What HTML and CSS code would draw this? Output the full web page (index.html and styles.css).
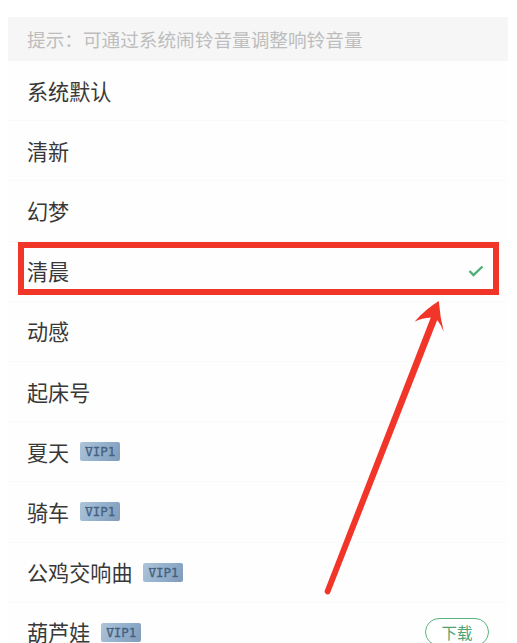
FILE: index.html
```html
<!DOCTYPE html>
<html lang="zh-CN">
<head>
  <meta charset="UTF-8">
  <meta name="viewport" content="width=device-width, initial-scale=1.0">
  <title>铃声</title>
  <link rel="stylesheet" href="styles.css">
</head>
<body>
  <div class="container">
    <div class="hint">提示：可通过系统闹铃音量调整响铃音量</div>

    <ul class="ring-list">
      <li class="ring-item"><span class="name">系统默认</span></li>
      <li class="ring-item"><span class="name">清新</span></li>
      <li class="ring-item"><span class="name">幻梦</span></li>
      <li class="ring-item selected">
        <span class="name">清晨</span>
        <svg class="check" viewBox="0 0 16 14"><path d="M1.5 7 L5.5 11 L14.5 2.5"/></svg>
      </li>
      <li class="ring-item"><span class="name">动感</span></li>
      <li class="ring-item"><span class="name">起床号</span></li>
      <li class="ring-item"><span class="name">夏天</span><span class="vip"><span class="v">V</span>IP1</span></li>
      <li class="ring-item"><span class="name">骑车</span><span class="vip"><span class="v">V</span>IP1</span></li>
      <li class="ring-item"><span class="name">公鸡交响曲</span><span class="vip"><span class="v">V</span>IP1</span></li>
      <li class="ring-item">
        <span class="name">葫芦娃</span><span class="vip"><span class="v">V</span>IP1</span>
        <button class="download">下载</button>
      </li>
    </ul>
  </div>

  <!-- Arrow pointing at the selected ringtone -->
  <svg class="arrow" viewBox="0 0 130 300">
    <path d="M9.6 291 L115.8 17.5 Q107 18 99.5 21.8 Q110 9.5 123.8 1 Q125 17 128.8 32 Q126 24.5 122.2 20 L15 293.2 A3 3 0 0 1 9.6 291 Z"/>
  </svg>
</body>
</html>
```
FILE: styles.css
```css
* {
  box-sizing: border-box;
}

body {
  margin: 0;
  height: 643px;
  overflow: hidden;
  position: relative;
  background: #fff;
  color: #383838;
  font-family: "Noto Sans CJK SC", sans-serif;
}

.container {
  margin: 17px 9px 0 8px;
  background: #fefefe;
}

.hint {
  height: 44px;
  padding-left: 19px;
  line-height: 44px;
  font-size: 18.65px;
  color: #bdbdbd;
  background: #f6f6f6;
  white-space: nowrap;
}

.ring-list {
  margin: 0;
  padding: 0;
  list-style: none;
}

.ring-item {
  position: relative;
  display: flex;
  align-items: center;
  height: 60.2px;
  padding: 0 19px;
  border-bottom: 1px solid #fafafa;
}

.name {
  font-size: 21.1px;
  line-height: 30px;
}

/* Red frame round the selected row */
.selected::after {
  content: "";
  position: absolute;
  box-sizing: border-box;
  top: 0;
  left: 10px;
  right: 9px;
  height: 53px;
  border: 6px solid #f23529;
}

.check {
  width: 16px;
  height: 14px;
  margin-left: auto;
  margin-right: 5px;
  fill: none;
  stroke: #4fae76;
  stroke-width: 2.4;
}

.vip {
  width: 40px;
  height: 19px;
  margin-left: 11px;
  border-radius: 2px;
  background: linear-gradient(120deg, #aec5da, #8facca 60%, #819bb8);
  color: #44617f;
  font-family: "DejaVu Sans Mono", monospace;
  font-size: 12.5px;
  line-height: 19px;
  text-align: center;
  -webkit-text-stroke: 0.3px #44617f;
}

/* V with a bar across the top */
.v {
  background: linear-gradient(#44617f, #44617f) center 3px / 7px 1px no-repeat;
}

.download {
  width: 64px;
  height: 28px;
  margin-left: auto;
  padding: 0;
  border: 1px solid #5bb381;
  border-radius: 14px;
  background: #fff;
  color: #4da374;
  font-family: inherit;
  font-size: 15.5px;
  line-height: 26px;
}

.arrow {
  position: absolute;
  left: 315px;
  top: 300px;
  width: 130px;
  height: 300px;
  fill: #f23529;
}
```
